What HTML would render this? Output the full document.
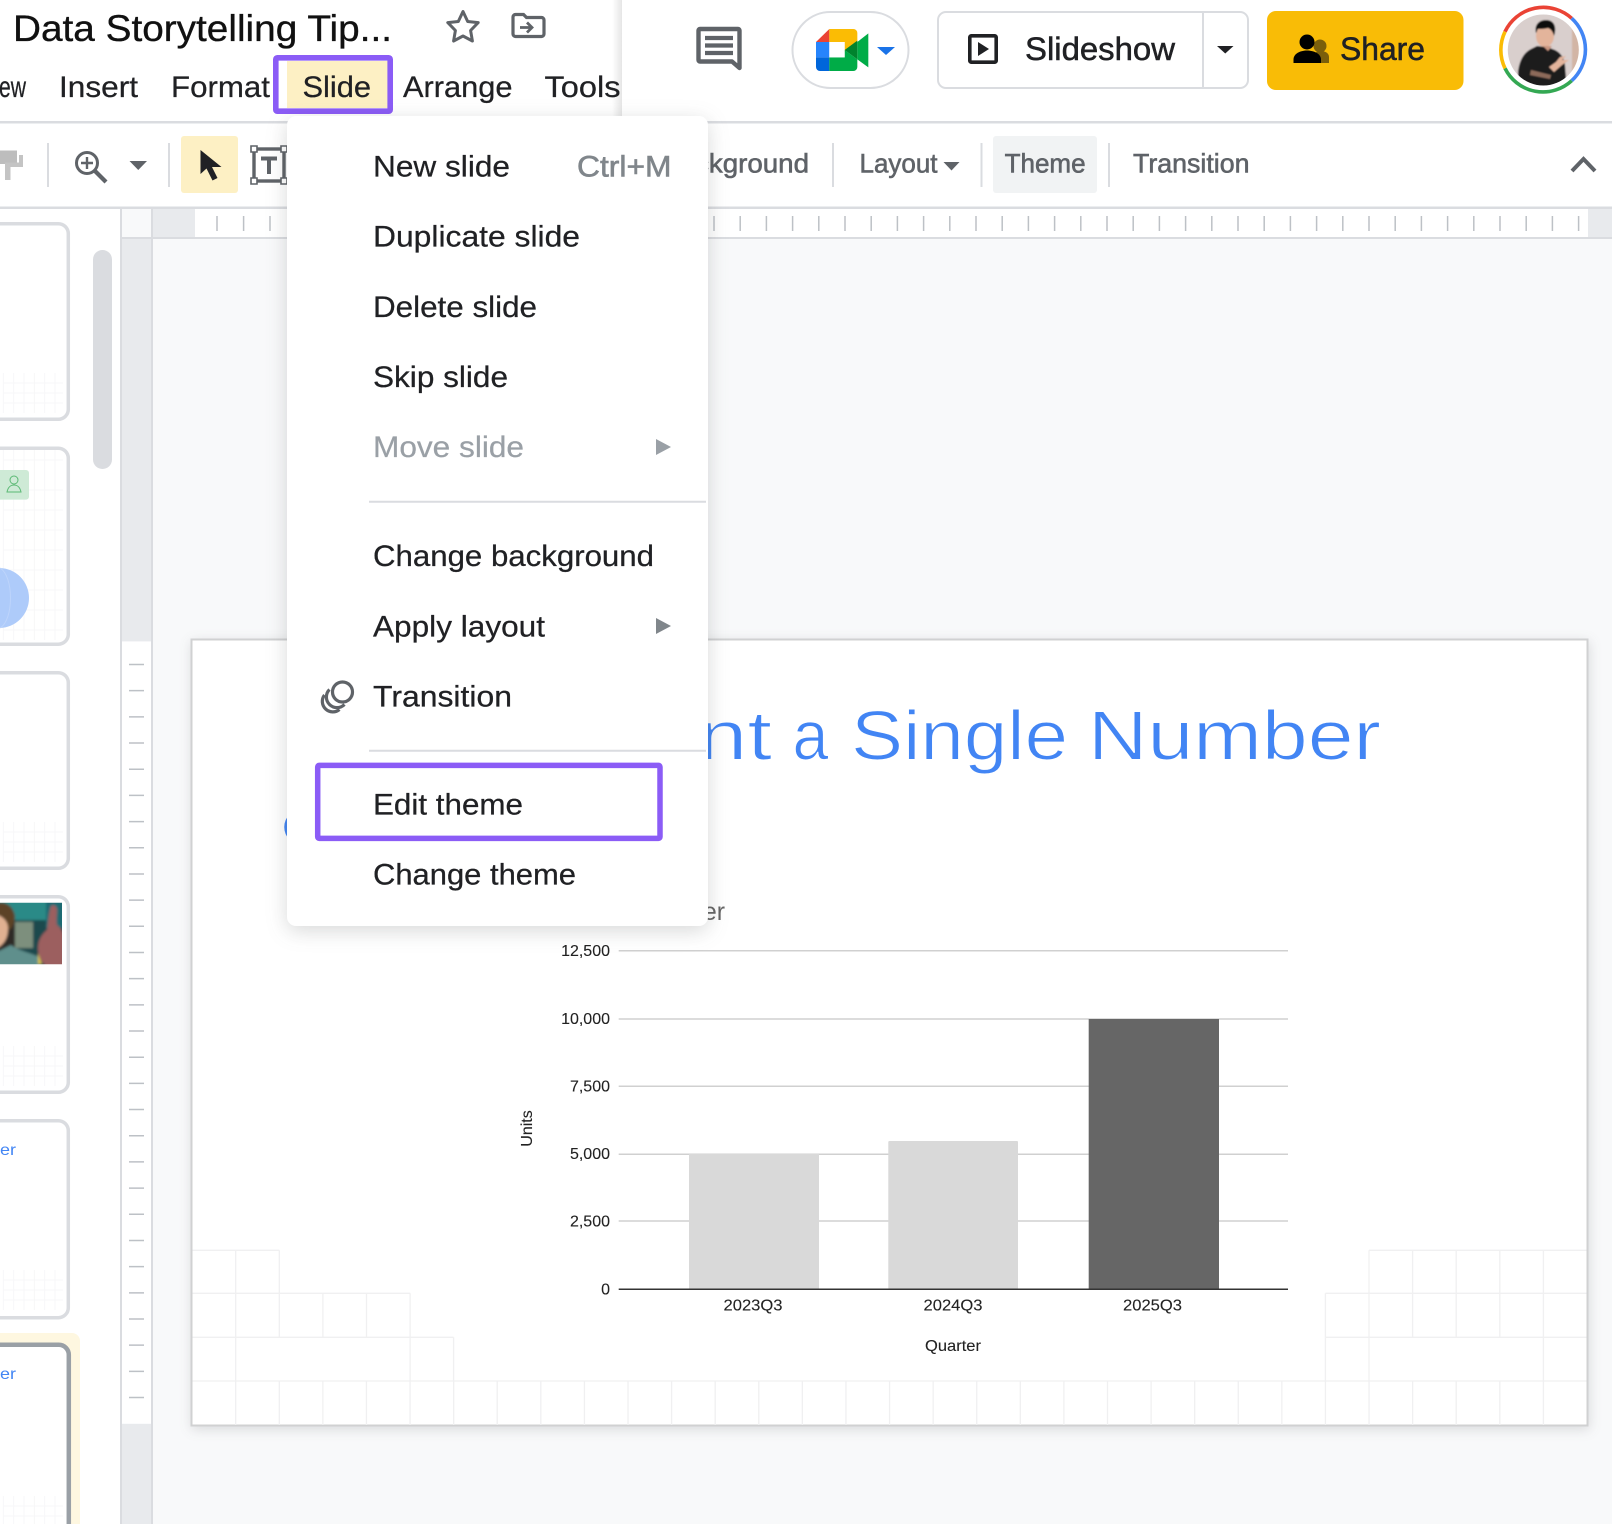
<!DOCTYPE html>
<html lang="en"><head><meta charset="utf-8"><title>Data Storytelling Tips</title>
<style>
html,body{margin:0;padding:0;background:#fff;width:1612px;height:1524px;overflow:hidden}
svg{display:block}
text{font-family:"Liberation Sans",Arial,sans-serif;white-space:pre}
.m{font-size:30px;fill:#202124;stroke:#202124;stroke-width:.25}
.i{font-size:30px;fill:#202124;stroke:#202124;stroke-width:.25}
.t{font-size:27px;fill:#5f6368;stroke:#5f6368;stroke-width:.6}
.c{font-size:16px;fill:#222;stroke:#222;stroke-width:.1}
.h{font-size:70px;fill:#4285f4;stroke:#fff;stroke-width:1.1}
</style></head><body>
<svg width="1612" height="1524" viewBox="0 0 1612 1524" xmlns="http://www.w3.org/2000/svg">
<defs>
<linearGradient id="sh" x1="0" x2="1" y1="0" y2="0"><stop offset="0" stop-color="#000" stop-opacity="0"/><stop offset="1" stop-color="#000" stop-opacity=".1"/></linearGradient>
<filter id="b1" x="-10%" y="-10%" width="120%" height="120%"><feGaussianBlur stdDeviation="1.2"/></filter>
<filter id="b2" x="-10%" y="-10%" width="120%" height="120%"><feGaussianBlur stdDeviation=".7"/></filter>
<clipPath id="ph"><rect x="0" y="902.7" width="62" height="61.5"/></clipPath>
<clipPath id="av"><circle cx="1543.3" cy="50" r="35.5"/></clipPath>
<g id="tg" fill="none" stroke="#f7f7f8" stroke-width="1"><path d="M3.3 150v40M13.7 150v40M24 150v40M34.4 150v40M44.7 150v40M55 150v40M3 160H63M3 170H63M3 180H63"/></g>
</defs>
<rect width="1612" height="1524" fill="#fff"/>

<!-- header shadow edge -->
<rect x="612" y="0" width="10" height="122" fill="url(#sh)"/>

<!-- title -->
<text x="13" y="41" font-size="37" fill="#111" stroke="#111" stroke-width=".35" textLength="379" lengthAdjust="spacingAndGlyphs">Data Storytelling Tip...</text>
<path d="M463 11.5L467.7 21.5 478.2 22.6 470.6 30.5 472.4 41 463 36 453.6 41 455.4 30.5 447.8 22.6 458.3 21.5Z" fill="none" stroke="#5f6368" stroke-width="3" stroke-linejoin="round"/>
<path d="M513 17a2.5 2.5 0 0 1 2.500-2.500h8l3 3h15a2.500 2.500 0 0 1 2.500 2.500v14a2.500 2.500 0 0 1-2.500 2.500h-26a2.500 2.500 0 0 1-2.500-2.500z" fill="none" stroke="#5f6368" stroke-width="3.200"/>
<path d="M520 27.500h11M527 22.500l5 5-5 5" fill="none" stroke="#5f6368" stroke-width="2.800"/>

<!-- menu bar -->
<rect x="287" y="61" width="100.500" height="47" fill="#fdf0c4"/>
<text class="m" x="-1" y="97" textLength="27" lengthAdjust="spacingAndGlyphs">ew</text>
<text class="m" x="59" y="97" textLength="79" lengthAdjust="spacingAndGlyphs">Insert</text>
<text class="m" x="171" y="97" textLength="99" lengthAdjust="spacingAndGlyphs">Format</text>
<text class="m" x="302.500" y="97" textLength="68.500" lengthAdjust="spacingAndGlyphs">Slide</text>
<text class="m" x="403" y="97" textLength="109.500" lengthAdjust="spacingAndGlyphs">Arrange</text>
<text class="m" x="544.500" y="97" textLength="76" lengthAdjust="spacingAndGlyphs">Tools</text>
<rect x="275.800" y="57.800" width="114.400" height="53.400" rx="1.500" fill="none" stroke="#8b5cf6" stroke-width="5.600"/>

<!-- top right -->
<path d="M700 29h38a1.500 1.500 0 0 1 1.500 1.500V68l-7.500-6.500H700a1.500 1.500 0 0 1-1.500-1.500V30.500A1.500 1.500 0 0 1 700 29z" fill="#fff" stroke="#5f6368" stroke-width="4.400" stroke-linejoin="round"/>
<path d="M705 38h28M705 45.500h28M705 53h28" stroke="#5f6368" stroke-width="4.200"/>

<rect x="792.500" y="12" width="116" height="76" rx="38" fill="#fff" stroke="#dadce0" stroke-width="2"/>
<g transform="translate(800 20) scale(.3333)">
<path d="M48 66L88 27V66Z" fill="#ea4335"/>
<path d="M88 27H160a12 12 0 0 1 12 12V66L134 95V66H88Z" fill="#fbbc04"/>
<rect x="48" y="66" width="40" height="46" fill="#2684fc"/>
<path d="M48 112H88V153H60a12 12 0 0 1-12-12Z" fill="#0066da"/>
<path d="M88 112H134V90L172 118V141a12 12 0 0 1-12 12H88Z" fill="#00ac47"/>
<path d="M205 40V142L172 118V66Z" fill="#00ac47"/>
<path d="M134 90L172 62V118Z" fill="#00832d"/>
<rect x="88" y="66" width="46" height="46" fill="#fff"/>
</g>
<path d="M877 47h18l-9 8z" fill="#1a73e8"/>

<rect x="938" y="12" width="310" height="76" rx="8" fill="#fff" stroke="#dadce0" stroke-width="2"/>
<path d="M1203 12V88" stroke="#dadce0" stroke-width="2"/>
<rect x="969.800" y="35.800" width="26.400" height="26.400" rx="1.500" fill="none" stroke="#202124" stroke-width="3.600"/>
<path d="M978 42V56L989 49Z" fill="#202124"/>
<text x="1025" y="60" font-size="32" fill="#202124" stroke="#202124" stroke-width=".5" textLength="150" lengthAdjust="spacingAndGlyphs">Slideshow</text>
<path d="M1217 46h16.500l-8.250 7.500z" fill="#202124"/>

<rect x="1267" y="11" width="196.500" height="79" rx="9" fill="#f9bc06"/>
<circle cx="1320" cy="46" r="6.500" fill="#7b5f0b"/>
<path d="M1312 63v-5c2-6 6-7 9-7 4 0 8 2 8 6v6z" fill="#7b5f0b"/>
<circle cx="1307" cy="42" r="7.500" fill="#000"/>
<path d="M1293.500 63v-3.500c0-6 7-9 13.500-9s14 3 14 9V63z" fill="#000"/>
<text x="1340" y="60" font-size="32" fill="#202124" stroke="#202124" stroke-width=".5" textLength="85" lengthAdjust="spacingAndGlyphs">Share</text>

<!-- avatar -->
<g fill="none" stroke-width="3.600">
<path d="M1505 31.700A42.300 42.300 0 0 1 1571.700 18.300" stroke="#ea4335"/>
<path d="M1571.700 18.300A42.300 42.300 0 0 1 1571.700 80.700" stroke="#4285f4"/>
<path d="M1571.700 80.700A42.300 42.300 0 0 1 1505 68.300" stroke="#34a853"/>
<path d="M1505 68.300A42.300 42.300 0 0 1 1505 31.700" stroke="#fbbc04"/>
</g>
<g clip-path="url(#av)"><g filter="url(#b2)">
<rect x="1505" y="12" width="76" height="76" fill="#d9cfcd"/>
<rect x="1572" y="12" width="9" height="76" fill="#d2b5a5"/>
<path d="M1518 90l0-18c1-10 5-19 13-23l6-3 10 1 8 3c6 3 9 8 10 15l2 25z" fill="#1c1c1f"/>
<ellipse cx="1545" cy="36" rx="9" ry="11" fill="#e3b49b"/>
<path d="M1536 33c-2-8 3-13 10-13 7 0 10 5 9 12 0 2-1 3-1 4-1-4-3-7-6-8-4 1-8 1-10 1-1 1-1 3-2 4z" fill="#111"/>
<path d="M1543 46l5 5 4-5z" fill="#c99680"/>
<path d="M1549 67l7-5 4-5 6-1-4 4 7 0-7 5-8 7z" fill="#e3b49b"/>
<path d="M1531 70l20 5-1 4-20-4z" fill="#8d6b5a"/>
</g></g>

<!-- toolbar borders -->
<rect x="0" y="121" width="1612" height="2.500" fill="#dadce0"/>
<rect x="0" y="206.500" width="1612" height="2.500" fill="#dadce0"/>

<!-- toolbar left -->
<path d="M0 150.500H17v13.500H0z" fill="#bdbdbd"/>
<path d="M19 155h4v12H10.500v13H5V162.500H19z" fill="#c4c4c4"/>
<path d="M48 143v44M169 143v44" stroke="#dadce0" stroke-width="2"/>
<circle cx="87" cy="163" r="10.500" fill="none" stroke="#5f6368" stroke-width="3"/>
<path d="M87 157v12M81 163h12" stroke="#5f6368" stroke-width="2.400"/>
<path d="M95 171l11 11" stroke="#5f6368" stroke-width="4.200"/>
<path d="M129.500 161h17.500l-8.750 9z" fill="#5f6368"/>
<rect x="181" y="136" width="57" height="57" rx="3" fill="#fdf0c4"/>
<path d="M200.500 150V174L206.500 168.500 212.500 180.500 217.500 178 212 167H221.500Z" fill="#202124"/>
<rect x="254" y="149" width="30" height="32" fill="none" stroke="#5f6368" stroke-width="3.400"/>
<path d="M251 146h6v6h-6zM281 146h6v6h-6zM251 178h6v6h-6zM281 178h6v6h-6z" fill="#fff" stroke="#5f6368" stroke-width="1.600"/>
<path d="M261 158.500h16M269 158.500V174" fill="none" stroke="#5f6368" stroke-width="4"/>

<!-- toolbar right -->
<text class="t" x="695" y="172.500" textLength="114" lengthAdjust="spacingAndGlyphs">ckground</text>
<path d="M833 143v44M981.500 143v44M1109 143v44" stroke="#dadce0" stroke-width="2"/>
<text class="t" x="859.500" y="172.500" textLength="78" lengthAdjust="spacingAndGlyphs">Layout</text>
<path d="M943.500 162h16l-8 8.500z" fill="#5f6368"/>
<rect x="993" y="136" width="104" height="57" rx="3" fill="#f1f3f4"/>
<text class="t" x="1004.600" y="172.500" textLength="81" lengthAdjust="spacingAndGlyphs">Theme</text>
<text class="t" x="1133" y="172.500" textLength="116.500" lengthAdjust="spacingAndGlyphs">Transition</text>
<path d="M1572 171l11.500-12 11.500 12" fill="none" stroke="#5f6368" stroke-width="4"/>

<!-- filmstrip -->
<rect x="93" y="250" width="19" height="219" rx="9.500" fill="#dadce0"/>
<use href="#tg" y="223"/>
<rect x="-12" y="223.700" width="80.300" height="195.600" rx="10" fill="none" stroke="#dadce0" stroke-width="3.500"/>

<g fill="none" stroke="#f7f7f8"><path d="M3.300 450v190M13.700 450v190M24 450v190M34.400 450v190M44.700 450v190M55 450v190M3 460H63M3 490H63M3 510H63M3 530H63M3 550H63M3 570H63M3 590H63M3 610H63M3 630H63"/></g>
<rect x="-6" y="470" width="35" height="29.600" rx="3" fill="#ceead6"/>
<circle cx="14" cy="480" r="4" fill="none" stroke="#5bb974"/>
<path d="M7 492c1-5 4-7 7-7s6 2 7 7z" fill="none" stroke="#5bb974"/>
<circle cx="-1" cy="598" r="30" fill="#aecbfa"/>
<path d="M0 568c14 8 14 52 0 60" fill="none" stroke="#bdd4fb"/>
<rect x="-12" y="448.200" width="80.300" height="196" rx="10" fill="none" stroke="#dadce0" stroke-width="3.500"/>

<use href="#tg" y="672"/>
<rect x="-12" y="672.700" width="80.300" height="195.600" rx="10" fill="none" stroke="#dadce0" stroke-width="3.500"/>

<use href="#tg" y="896"/>
<g clip-path="url(#ph)"><g filter="url(#b1)">
<rect x="-3" y="900" width="68" height="68" fill="#1d4a4d"/>
<rect x="-3" y="900" width="49" height="20" fill="#2b8a87"/>
<rect x="46" y="900" width="19" height="28" fill="#1b6a72"/>
<rect x="15" y="922" width="18" height="26" fill="#7d8f7d"/>
<rect x="-3" y="920" width="18" height="30" fill="#2e2a28"/>
<path d="M-3 903c9-2 16 3 18 13 0 5-2 10-4 13l-14 0z" fill="#5b4328"/>
<path d="M-3 915c5 1 11 6 11 13 0 9-3 16-11 20z" fill="#e0b091"/>
<path d="M-3 952l14-7c8 6 20 8 28 12l0 10H-3z" fill="#5f8f8c"/>
<path d="M38 953l4 11h-4z" fill="#d8c24c"/>
<path d="M51 906c3-2 6 0 6 4 0 6-1 11 0 15 4 3 7 8 7 14v28H48c-6-3-10-10-10-19 0-8 4-14 9-18 1-8 2-18 4-24z" fill="#9c5f5e"/>
</g></g>
<rect x="-12" y="896.700" width="80.300" height="195.600" rx="10" fill="none" stroke="#dadce0" stroke-width="3.500"/>

<use href="#tg" y="1120"/>
<text x="0" y="1155" font-size="16" fill="#4285f4" textLength="16" lengthAdjust="spacingAndGlyphs">er</text>
<rect x="-12" y="1120.700" width="80.300" height="197" rx="10" fill="none" stroke="#dadce0" stroke-width="3.500"/>

<rect x="-12" y="1333" width="92" height="220" rx="8" fill="#fef7e0"/>
<rect x="-12" y="1344.800" width="80.800" height="220" rx="10" fill="#fff" stroke="#9aa0a6" stroke-width="4.500"/>
<use href="#tg" y="1346"/>
<text x="0" y="1379" font-size="16" fill="#4285f4" textLength="16" lengthAdjust="spacingAndGlyphs">er</text>

<!-- rulers -->
<rect x="120" y="209" width="1492" height="1315" fill="#f8f9fa"/>
<rect x="120" y="209" width="2" height="1315" fill="#dadce0"/>
<rect x="122" y="239" width="29" height="1285" fill="#e8eaed"/>
<rect x="122" y="641.400" width="29" height="782.400" fill="#fff"/>
<rect x="151" y="209" width="2" height="1315" fill="#dadce0"/>
<rect x="153" y="209" width="42" height="28" fill="#e8eaed"/>
<rect x="195" y="209" width="1393" height="28" fill="#fff"/>
<rect x="1588" y="209" width="24" height="28" fill="#e8eaed"/>
<rect x="122" y="237" width="1490" height="2" fill="#dadce0"/>
<path d="M217 216v15M243.600 216v15M270 216v15" stroke="#bdc1c6" stroke-width="1.500"/>
<path stroke="#bdc1c6" stroke-width="1.500" fill="none" d="M714 216v15m26.200-15v15m26.200-15v15m26.200-15v15m26.200-15v15m26.200-15v15m26.200-15v15m26.200-15v15m26.200-15v15m26.200-15v15m26.200-15v15m26.200-15v15m26.200-15v15m26.200-15v15m26.200-15v15m26.200-15v15m26.200-15v15m26.200-15v15m26.200-15v15m26.200-15v15m26.200-15v15m26.200-15v15m26.200-15v15m26.200-15v15m26.200-15v15m26.200-15v15m26.200-15v15m26.200-15v15m26.200-15v15m26.200-15v15m26.200-15v15m26.200-15v15m26.200-15v15m26.200-15v15"/>
<path stroke="#bdc1c6" stroke-width="1.500" fill="none" d="M129 664.500h15m-15 26.180h15m-15 26.180h15m-15 26.180h15m-15 26.180h15m-15 26.180h15m-15 26.180h15m-15 26.180h15m-15 26.180h15m-15 26.180h15m-15 26.180h15m-15 26.180h15m-15 26.180h15m-15 26.180h15m-15 26.180h15m-15 26.180h15m-15 26.180h15m-15 26.180h15m-15 26.180h15m-15 26.180h15m-15 26.180h15m-15 26.180h15m-15 26.180h15m-15 26.180h15m-15 26.180h15m-15 26.180h15m-15 26.180h15m-15 26.180h15m-15 26.180h15"/>

<!-- slide -->
<rect x="191.500" y="639.500" width="1396" height="786" fill="#fff" stroke="#d0d1d2" stroke-width="2" style="filter:drop-shadow(1px 3px 6px rgba(60,64,67,.16))"/>
<g fill="none" stroke="#f0f0f1" stroke-width="1.300">
<path d="M192.500 1250.300H279.300M235.700 1250.300V1293.300M279.300 1250.300V1293.300"/>
<path d="M192.500 1293.300H410.100M235.700 1293.300V1337.300M279.300 1293.300V1337.300M322.900 1293.300V1337.300M366.500 1293.300V1337.300M410.100 1293.300V1337.300"/>
<path d="M192.500 1337.300H453.600M235.700 1337.300V1381M410.100 1337.300V1381M453.600 1337.300V1381"/>
<path d="M192.500 1381H1586.500"/>
<path d="M235.700 1381v44m43.590-44v44m43.590-44v44m43.590-44v44m43.590-44v44m43.590-44v44m43.590-44v44m43.590-44v44m43.590-44v44m43.590-44v44m43.590-44v44m43.590-44v44m43.590-44v44m43.590-44v44m43.590-44v44m43.590-44v44m43.590-44v44m43.590-44v44m43.590-44v44m43.590-44v44m43.590-44v44m43.590-44v44m43.590-44v44m43.590-44v44m43.590-44v44m43.590-44v44m43.590-44v44m43.590-44v44m43.590-44v44m43.590-44v44m43.590-44v44"/>
<path d="M1369 1250.300H1586.500M1369 1250.300V1293.300M1412.600 1250.300V1293.300M1456.200 1250.300V1293.300M1499.800 1250.300V1293.300M1543.400 1250.300V1293.300"/>
<path d="M1325.400 1293.300H1586.500M1325.400 1293.300V1337.300M1369 1293.300V1337.300M1412.600 1293.300V1337.300M1456.200 1293.300V1337.300M1499.800 1293.300V1337.300M1543.400 1293.300V1337.300"/>
<path d="M1325.400 1337.300H1586.500M1325.400 1337.300V1381M1369 1337.300V1381M1543.400 1337.300V1381"/>
</g>

<!-- slide title -->
<text class="h" x="698" y="759.500" textLength="74" lengthAdjust="spacingAndGlyphs">nt</text>
<text class="h" x="792.500" y="759.500" textLength="36" lengthAdjust="spacingAndGlyphs">a</text>
<text class="h" x="851" y="759.500" textLength="217" lengthAdjust="spacingAndGlyphs">Single</text>
<text class="h" x="1088" y="759.500" textLength="293" lengthAdjust="spacingAndGlyphs">Number</text>
<text x="703" y="920" font-size="25" fill="#666" textLength="22" lengthAdjust="spacingAndGlyphs">er</text>
<circle cx="302" cy="827" r="16" fill="none" stroke="#4285f4" stroke-width="3.500"/>

<!-- chart -->
<g stroke="#d0d0d0" stroke-width="1.500"><path d="M618.700 950.700H1288M618.700 1019H1288M618.700 1086.300H1288M618.700 1154.300H1288M618.700 1221H1288"/></g>
<rect x="689" y="1154" width="130" height="135" fill="#d9d9d9"/>
<rect x="888.300" y="1141" width="129.700" height="148" rx="1" fill="#d9d9d9"/>
<rect x="1088.700" y="1019" width="130.300" height="270" fill="#666"/>
<path d="M618.700 1289.300H1288" stroke="#333" stroke-width="1.500"/>
<g text-anchor="end">
<text class="c" x="610" y="956">12,500</text>
<text class="c" x="610" y="1024">10,000</text>
<text class="c" x="610" y="1091.500">7,500</text>
<text class="c" x="610" y="1159">5,000</text>
<text class="c" x="610" y="1226.500">2,500</text>
<text class="c" x="610" y="1294.500">0</text>
</g>
<g text-anchor="middle">
<text class="c" x="753" y="1310.700" textLength="59" lengthAdjust="spacingAndGlyphs">2023Q3</text>
<text class="c" x="953" y="1310.700" textLength="59" lengthAdjust="spacingAndGlyphs">2024Q3</text>
<text class="c" x="1152.500" y="1310.700" textLength="59" lengthAdjust="spacingAndGlyphs">2025Q3</text>
<text class="c" x="953" y="1351" textLength="56" lengthAdjust="spacingAndGlyphs">Quarter</text>
<text class="c" transform="translate(532 1128.500) rotate(-90)" x="0" y="0">Units</text>
</g>

<!-- dropdown menu -->
<rect x="287" y="116" width="421" height="810" rx="9" fill="#fff" style="filter:drop-shadow(0 5px 10px rgba(60,64,67,.2))"/>
<text class="i" x="373" y="176.500" textLength="137" lengthAdjust="spacingAndGlyphs">New slide</text>
<text x="577" y="176.500" font-size="30" fill="#80868b" stroke="#80868b" stroke-width=".6" textLength="94.500" lengthAdjust="spacingAndGlyphs">Ctrl+M</text>
<text class="i" x="373" y="246.500" textLength="207" lengthAdjust="spacingAndGlyphs">Duplicate slide</text>
<text class="i" x="373" y="317" textLength="164" lengthAdjust="spacingAndGlyphs">Delete slide</text>
<text class="i" x="373" y="387" textLength="135" lengthAdjust="spacingAndGlyphs">Skip slide</text>
<text x="373" y="457" font-size="30" fill="#9aa0a6" stroke="#9aa0a6" stroke-width=".25" textLength="151" lengthAdjust="spacingAndGlyphs">Move slide</text>
<path d="M656 439v16l15-8z" fill="#9aa0a6"/>
<path d="M369 501.700H706" stroke="#dadce0" stroke-width="2"/>
<text class="i" x="373" y="566" textLength="281" lengthAdjust="spacingAndGlyphs">Change background</text>
<text class="i" x="373" y="636.500" textLength="172" lengthAdjust="spacingAndGlyphs">Apply layout</text>
<path d="M656 618v16l15-8z" fill="#80868b"/>
<text class="i" x="373" y="706.500" textLength="139" lengthAdjust="spacingAndGlyphs">Transition</text>
<g fill="none" stroke="#5f6368" stroke-width="3.200">
<circle cx="342.500" cy="692" r="10"/>
<path d="M329.500 689.500A10.500 10.500 0 0 0 344.500 704.500"/>
<path d="M324.500 695A10.500 10.500 0 0 0 339.500 709.500"/>
</g>
<path d="M369 750.700H706" stroke="#dadce0" stroke-width="2"/>
<text class="i" x="373" y="814.500" textLength="150" lengthAdjust="spacingAndGlyphs">Edit theme</text>
<text class="i" x="373" y="884.500" textLength="203" lengthAdjust="spacingAndGlyphs">Change theme</text>
<rect x="317.700" y="765.400" width="342.300" height="73" rx="1.500" fill="none" stroke="#8b5cf6" stroke-width="5.500"/>
</svg>
</body></html>
